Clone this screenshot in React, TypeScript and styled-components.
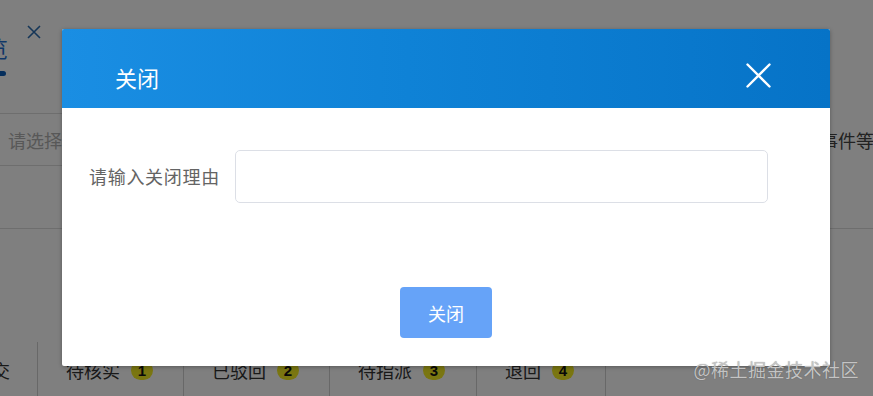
import React, { FC } from 'react';
import styled, { createGlobalStyle } from 'styled-components';

const GlobalStyle = createGlobalStyle`
    html, body {
        margin: 0;
        padding: 0;
        width: 100%;
        height: 100%;
        overflow: hidden;
        background: #ffffff;
        font-family: "Noto Sans CJK SC", "Noto Sans", sans-serif;
    }
    #root {
        height: 100%;
    }
`;

const tabs = [
    { label: '待核实', count: 1 },
    { label: '已驳回', count: 2 },
    { label: '待指派', count: 3 },
    { label: '退回', count: 4 },
];

const App: FC = () => {
    return (
        <>
            <GlobalStyle />
            <Page>
                <TopBar>
                    <PageTab>
                        <PageTabText>预览</PageTabText>
                        <TabClose>
                            <svg width="14" height="14" viewBox="0 0 14 14">
                                <path d="M1 1 L13 13 M13 1 L1 13" stroke="#2b6cb0" strokeWidth="1.6" fill="none" />
                            </svg>
                        </TabClose>
                    </PageTab>
                    <TabUnderline />
                </TopBar>
                <FilterRow>
                    <FilterBox>
                        <Placeholder>请选择类型</Placeholder>
                    </FilterBox>
                    <FilterRight>事件等级</FilterRight>
                </FilterRow>
                <Spacer />
                <StatusRow>
                    <StatusCell $first>
                        <FirstLabel>提交</FirstLabel>
                    </StatusCell>
                    {tabs.map(t => (
                        <StatusCell key={t.label}>
                            {t.label}
                            <Badge>{t.count}</Badge>
                        </StatusCell>
                    ))}
                    <StatusFill />
                </StatusRow>

                <Mask />

                <Dialog>
                    <DialogHeader>
                        <DialogTitle>关闭</DialogTitle>
                        <CloseButton>
                            <svg width="25" height="25" viewBox="0 0 25 25">
                                <path d="M1.5 1.5 L23.5 23.5 M23.5 1.5 L1.5 23.5" stroke="#ffffff" strokeWidth="2.4" strokeLinecap="round" fill="none" />
                            </svg>
                        </CloseButton>
                    </DialogHeader>
                    <DialogBody>
                        <FormRow>
                            <FormLabel>请输入关闭理由</FormLabel>
                            <TextInput />
                        </FormRow>
                        <Footer>
                            <PrimaryButton>关闭</PrimaryButton>
                        </Footer>
                    </DialogBody>
                </Dialog>

                <Watermark>@稀土掘金技术社区</Watermark>
            </Page>
        </>
    );
}

export default App;

const Page = styled.div`
    position: relative;
    width: 873px;
    height: 396px;
    overflow: hidden;
    display: flex;
    flex-direction: column;
    background: #ffffff;
`;

const TopBar = styled.div`
    height: 113px;
    box-sizing: border-box;
    padding-top: 25px;
`;

const PageTab = styled.div`
    display: flex;
    align-items: flex-start;
    margin-left: -36px;
`;

const PageTabText = styled.span`
    font-size: 22px;
    line-height: 44px;
    color: #1f6fd0;
`;

const TabClose = styled.span`
    display: flex;
    margin-left: 19px;
`;

const TabUnderline = styled.div`
    width: 14px;
    height: 5px;
    margin-left: -8px;
    margin-top: 2px;
    border-radius: 3px;
    background: #0b5cb8;
`;

const FilterRow = styled.div`
    height: 53px;
    display: flex;
    align-items: stretch;
    justify-content: space-between;
`;

const FilterBox = styled.div`
    width: 320px;
    box-sizing: border-box;
    border-top: 1px solid #dcdcdc;
    border-bottom: 1px solid #dcdcdc;
    display: flex;
    align-items: center;
`;

const Placeholder = styled.span`
    margin-left: 8px;
    font-size: 18px;
    color: #b0b0b0;
`;

const FilterRight = styled.span`
    display: flex;
    align-items: center;
    margin-right: -19px;
    font-size: 18px;
    color: #444444;
    white-space: nowrap;
`;

const Spacer = styled.div`
    box-sizing: border-box;
    margin-top: 62px;
    height: 114px;
    border-top: 1px solid #dcdcdc;
`;

const StatusRow = styled.div`
    flex: 1;
    display: flex;
`;

const StatusCell = styled.div<{ $first?: boolean }>`
    width: ${p => (p.$first ? '38px' : '146px')};
    border-right: 1px solid #d0d0d0;
    box-sizing: border-box;
    display: flex;
    align-items: center;
    padding-left: ${p => (p.$first ? '0' : '28px')};
    padding-top: 2px;
    font-size: 18px;
    color: #333333;
    white-space: nowrap;
    overflow: hidden;
    &:nth-child(4) {
        width: 147px;
    }
    &:nth-child(5) {
        width: 129px;
    }
`;

const FirstLabel = styled.span`
    margin-left: -8px;
    direction: rtl;
    overflow: hidden;
    width: 18px;
    display: inline-block;
`;

const Badge = styled.span`
    display: inline-flex;
    align-items: center;
    justify-content: center;
    width: 22px;
    height: 19px;
    margin-left: 11px;
    border-radius: 10px;
    background: #f4ec22;
    color: #111111;
    font-size: 15px;
    font-weight: bold;
    font-family: "Liberation Sans", sans-serif;
`;

const StatusFill = styled.div`
    flex: 1;
`;

const Mask = styled.div`
    position: absolute;
    inset: 0;
    background: rgba(0, 0, 0, 0.5);
`;

const Dialog = styled.div`
    position: absolute;
    left: 62px;
    top: 29px;
    width: 768px;
    height: 337px;
    background: #ffffff;
    border-radius: 2px;
    box-shadow: 0 1px 4px rgba(0, 0, 0, 0.3);
    display: flex;
    flex-direction: column;
    overflow: hidden;
`;

const DialogHeader = styled.div`
    height: 79px;
    box-sizing: border-box;
    flex-shrink: 0;
    display: flex;
    align-items: center;
    justify-content: space-between;
    padding: 17px 59px 0 53px;
    background: linear-gradient(90deg, #1a8ee3 0%, #0f82d6 45%, #0673c7 100%);
`;

const DialogTitle = styled.span`
    font-size: 22px;
    color: #ffffff;
    line-height: 1;
`;

const CloseButton = styled.span`
    display: flex;
    margin-top: -4px;
    cursor: pointer;
`;

const DialogBody = styled.div`
    flex: 1;
    display: flex;
    flex-direction: column;
    padding: 42px 62px 28px 27px;
`;

const FormRow = styled.div`
    display: flex;
    align-items: center;
`;

const FormLabel = styled.label`
    width: 146px;
    flex-shrink: 0;
    font-size: 18px;
    letter-spacing: 0.7px;
    color: #646464;
    white-space: nowrap;
    margin-top: -1px;
`;

const TextInput = styled.input`
    flex: 1;
    height: 53px;
    box-sizing: border-box;
    border: 1px solid #dcdfe6;
    border-radius: 5px;
    outline: none;
    background: #ffffff;
`;

const Footer = styled.div`
    margin-top: auto;
    display: flex;
    justify-content: center;
    padding-left: 35px;
`;

const PrimaryButton = styled.button`
    width: 92px;
    height: 51px;
    border: none;
    border-radius: 4px;
    background: #66a3f8;
    color: #ffffff;
    font-size: 18px;
    font-family: "Noto Sans CJK SC", sans-serif;
    cursor: pointer;
`;

const Watermark = styled.div`
    position: absolute;
    right: 14px;
    bottom: 14px;
    font-size: 18px;
    color: #c4c4c4;
    text-shadow: 0 0 1px rgba(0, 0, 0, 0.35);
    letter-spacing: 0.5px;
    pointer-events: none;
`;
